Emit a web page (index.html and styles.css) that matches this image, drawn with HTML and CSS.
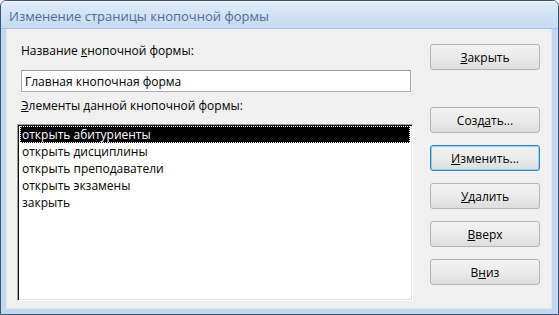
FILE: index.html
```html
<!DOCTYPE html>
<html lang="ru">
<head>
    <meta charset="UTF-8">
    <title>Изменение страницы кнопочной формы</title>
    <link rel="stylesheet" href="styles.css">
</head>
<body>
    <div class="window">
        <div class="titlebar">Изменение страницы кнопочной формы</div>
        <div class="frame">
            <div class="client">
                <div class="left">
                    <label class="caption" for="name">Название <u>к</u>нопочной формы:</label>
                    <input type="text" id="name" class="textbox" value="Главная кнопочная форма">
                    <div class="caption second"><u>Э</u>лементы данной кнопочной формы:</div>
                    <div class="listbox">
                        <div class="item selected">открыть абитуриенты</div>
                        <div class="item">открыть дисциплины</div>
                        <div class="item">открыть преподаватели</div>
                        <div class="item">открыть экзамены</div>
                        <div class="item">закрыть</div>
                    </div>
                </div>
                <div class="buttons">
                    <button class="btn"><u>З</u>акрыть</button>
                    <button class="btn create">Созд<u>а</u>ть...</button>
                    <button class="btn default"><u>И</u>зменить...</button>
                    <button class="btn"><u>У</u>далить</button>
                    <button class="btn"><u>В</u>верх</button>
                    <button class="btn">В<u>н</u>из</button>
                </div>
            </div>
        </div>
    </div>
</body>
</html>
```

FILE: styles.css
```css
body {
    margin: 0;
    font-family: "Open Sans", "Noto Sans", sans-serif;
    font-size: 12px;
    color: #000;
    background: #fff;
}

.window {
    width: 559px;
    height: 315px;
    box-sizing: border-box;
    border: 1px solid #3a5475;
    border-radius: 6px 6px 0 0;
    background: #c4d8f1;
    display: flex;
    flex-direction: column;
    overflow: hidden;
}

.titlebar {
    height: 27px;
    line-height: 28px;
    padding-left: 8px;
    font-size: 13px;
    color: #4f6c94;
    background: linear-gradient(#e0ebf8, #d2e2f5 50%, #c6daf2);
    border-top: 1px solid #f4f8fd;
    box-sizing: border-box;
}

.frame {
    flex: 1;
    padding: 0 6px 5px 5px;
    border-top: 1px solid #a4c0e4;
    background: #c2d7f0;
}

.client {
    height: 100%;
    box-sizing: border-box;
    background: #f0f0f0;
    border: 1px solid #dfe9f5;
    border-top: none;
    display: flex;
    gap: 17px;
    padding: 14px 11px 0 10px;
}

.left {
    width: 396px;
    display: flex;
    flex-direction: column;
}

.caption {
    display: block;
    line-height: 16px;
    padding-left: 4px;
}

.caption.second {
    margin-top: 6px;
}

.textbox {
    margin: 11px 0 0 4px;
    width: 390px;
    height: 22px;
    box-sizing: border-box;
    border: 1px solid #abadb3;
    border-top-color: #9a9ca3;
    padding: 0 3px;
    font: inherit;
    color: #000;
    background: #fff;
    outline: none;
}

.listbox {
    margin-top: 10px;
    height: 177px;
    box-sizing: border-box;
    background: #fff;
    border-top: 1px solid #a0a0a0;
    border-left: 1px solid #a0a0a0;
    border-right: 1px solid #fff;
    border-bottom: 1px solid #fff;
    box-shadow: inset 1px 1px 0 #101010, inset -1px -1px 0 #e3e3e3;
    padding: 1px 2px;
}

.item {
    height: 17px;
    line-height: 17px;
    padding-left: 2px;
    white-space: nowrap;
}

.item.selected {
    background: #000;
    color: #fff;
    outline: 1px dotted #fff;
    outline-offset: -1px;
}

.buttons {
    width: 110px;
    display: flex;
    flex-direction: column;
    gap: 12px;
    padding-top: 1px;
}

.btn {
    height: 26px;
    box-sizing: border-box;
    border: 1px solid #b4b4b4;
    border-radius: 3px;
    background: linear-gradient(#f2f2f2, #ebebeb 50%, #dddddd);
    font: inherit;
    color: #000;
    padding: 0;
}

.btn.create {
    margin-top: 25px;
}

.btn.default {
    border-color: #3c7fb1;
    box-shadow: inset 0 0 0 1px #8fd2f4;
}
```
